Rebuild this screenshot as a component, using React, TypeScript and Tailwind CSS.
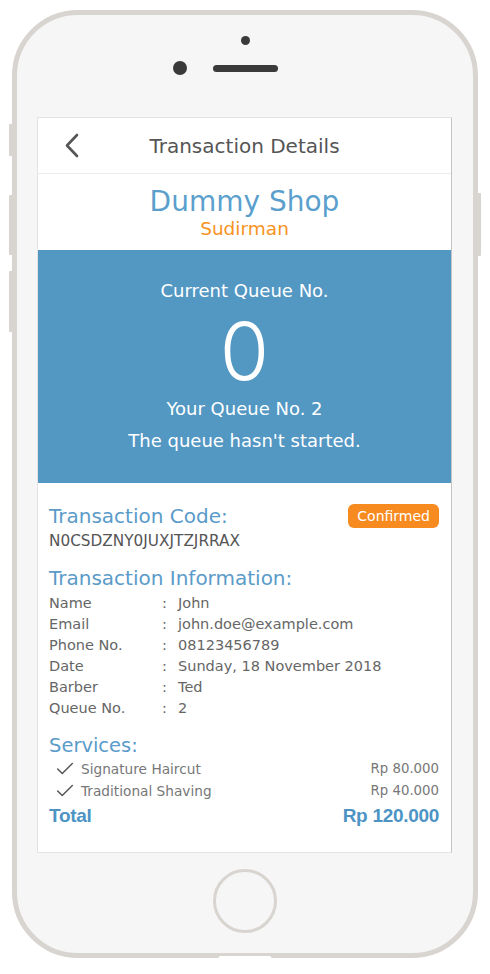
import React from "react";

const rows: [string, string][] = [
  ["Name", "John"],
  ["Email", "john.doe@example.com"],
  ["Phone No.", "08123456789"],
  ["Date", "Sunday, 18 November 2018"],
  ["Barber", "Ted"],
  ["Queue No.", "2"],
];

const services: [string, string][] = [
  ["Signature Haircut", "Rp 80.000"],
  ["Traditional Shaving", "Rp 40.000"],
];

function Check() {
  return (
    <svg width="22" height="22" viewBox="0 0 24 24" fill="none" stroke="#555" strokeWidth="1.6" strokeLinecap="round" strokeLinejoin="round">
      <path d="M20 6 9 17l-5-5" />
    </svg>
  );
}

export default function App() {
  return (
    <div className="w-[490px] h-[974px] bg-white pl-[12px] pt-[10px] font-['DejaVu_Sans',sans-serif]">
      <div className="relative w-[466px] h-[948px] border-[5px] border-[#d8d4d0] rounded-[66px] bg-[#f6f6f6] flex flex-col">
        {/* side buttons */}
        <div className="absolute left-[-8px] top-[109px] w-[3px] h-[32px] bg-[#d8d4d0] rounded-l-[1px]" />
        <div className="absolute left-[-8px] top-[180px] w-[3px] h-[60px] bg-[#d8d4d0] rounded-l-[1px]" />
        <div className="absolute left-[-8px] top-[256px] w-[3px] h-[61px] bg-[#d8d4d0] rounded-l-[1px]" />
        <div className="absolute right-[-8px] top-[178px] w-[3px] h-[63px] bg-[#d8d4d0] rounded-r-[1px]" />
        <div className="absolute left-1/2 -translate-x-1/2 bottom-[-5px] w-[53px] h-[2px] bg-white rounded-t-full" />

        {/* top sensors */}
        <div className="self-center mt-[21px] w-[9px] h-[9px] rounded-full bg-[#3a3a3a]" />
        <div className="flex items-center justify-center gap-[26px] mt-[16px]">
          <div className="w-[14px] h-[14px] rounded-full bg-[#3a3a3a]" />
          <div className="w-[65px] h-[7px] rounded-full bg-[#3a3a3a]" />
          <div className="w-[14px] h-[14px]" />
        </div>

        {/* screen */}
        <div className="ml-[20px] mt-[42px] w-[415px] h-[736px] bg-white border border-[#e4e4e4] border-r-[#c4c4c4] flex flex-col">
          <div className="relative h-[56px] flex items-center justify-center border-b border-[#ececec]">
            <svg className="absolute left-[27px] top-[15px]" width="14" height="25" viewBox="0 0 14 25" fill="none" stroke="#555" strokeWidth="2.6" strokeLinecap="round" strokeLinejoin="round">
              <polyline points="12,2 2,12.5 12,23" />
            </svg>
            <span className="text-[20px] text-[#555]">Transaction Details</span>
          </div>

          <div className="flex flex-col items-center pt-[12px] pb-[10px]">
            <div className="text-[28px] leading-[32px] text-[#5b9fcd]">Dummy Shop</div>
            <div className="text-[18.5px] leading-[22px] text-[#f7931e]">Sudirman</div>
          </div>

          <div className="bg-[#5397c3] flex flex-col items-center text-white pt-[30px] h-[233px]">
            <div className="text-[18px] leading-[22px]">Current Queue No.</div>
            <div className="mt-[9px] h-[80px] text-[80px] leading-[80px] font-light font-['Inter',sans-serif]">0</div>
            <div className="mt-[7px] text-[18px] leading-[22px]">Your Queue No. 2</div>
            <div className="mt-[10px] text-[18px] leading-[22px]">The queue hasn't started.</div>
          </div>

          <div className="pl-[11px] pr-[12px] pt-[21px] flex flex-col">
            <div className="flex items-center justify-between h-[24px]">
              <span className="text-[20px] leading-[24px] text-[#5a9bc9]">Transaction Code:</span>
              <span className="h-[24px] px-[9px] flex items-center rounded-[6px] bg-[#f78b1f] text-white text-[14px]">Confirmed</span>
            </div>
            <div className="mt-[3px] text-[15.3px] leading-[20px] text-[#555]">N0CSDZNY0JUXJTZJRRAX</div>
            <div className="mt-[15px] text-[20px] leading-[24px] text-[#5a9bc9]">Transaction Information:</div>
            <div className="mt-[3px] grid grid-cols-[113px_16px_1fr] text-[14.5px] leading-[21px] text-[#666]">
              {rows.map(([k, v]) => (
                <React.Fragment key={k}>
                  <span>{k}</span>
                  <span>:</span>
                  <span>{v}</span>
                </React.Fragment>
              ))}
            </div>
            <div className="mt-[15px] text-[19.5px] leading-[24px] text-[#5a9bc9]">Services:</div>
            <div className="flex flex-col">
              {services.map(([n, p]) => (
                <div key={n} className="flex items-center h-[22px] text-[#777]">
                  <div className="ml-[5px] mr-[5px] flex items-center"><Check /></div>
                  <span className="flex-1 text-[13.7px]">{n}</span>
                  <span className="text-[13.3px]">{p}</span>
                </div>
              ))}
            </div>
            <div className="mt-[2px] flex items-center justify-between h-[24px] text-[19px] font-bold tracking-[-0.3px] text-[#4d94c5] font-['Liberation_Sans',sans-serif]">
              <span>Total</span>
              <span>Rp 120.000</span>
            </div>
          </div>
        </div>

        {/* home button */}
        <div className="self-center mt-[16px] w-[64px] h-[64px] rounded-full border-[3px] border-[#d8d4d0]" />
      </div>
    </div>
  );
}
